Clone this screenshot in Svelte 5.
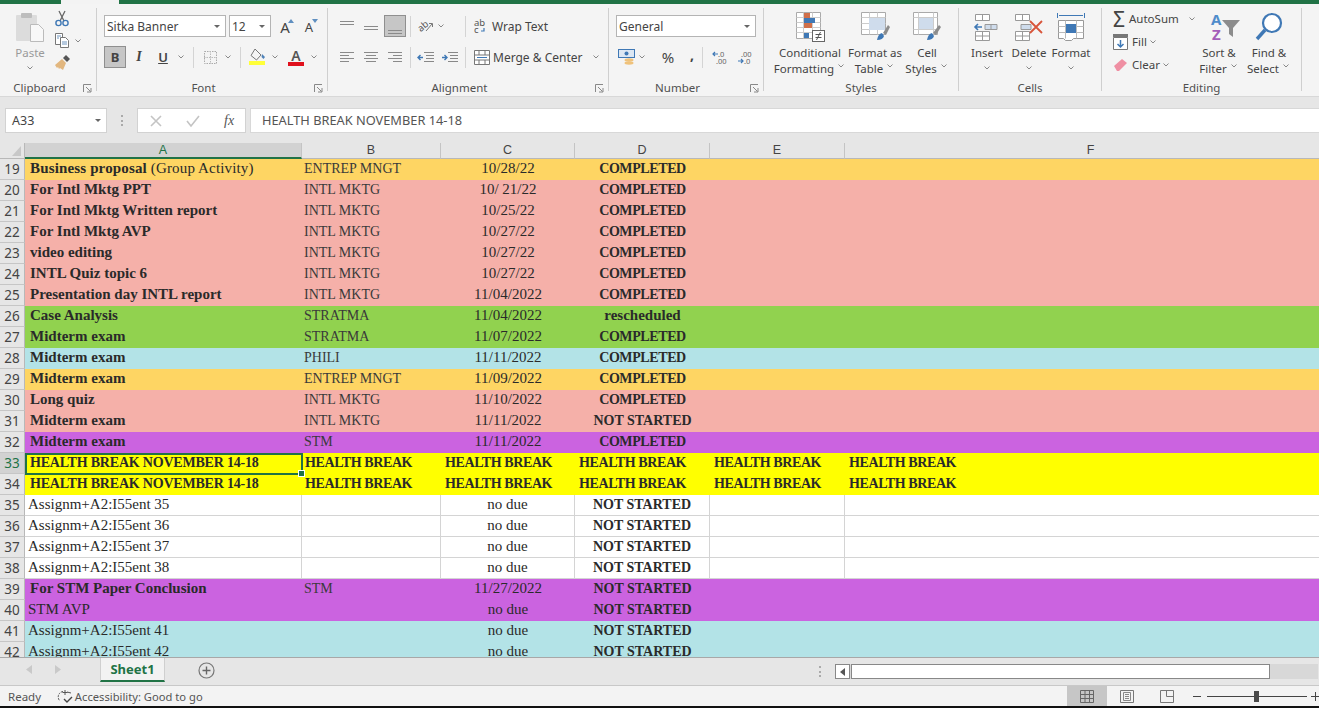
<script>
  const tints = { o: 'orange', p: 'pink', g: 'lime', b: 'blue', v: 'violet', y: 'yellow', w: 'white' };
  const HB = 'HEALTH BREAK';

  // n, tint, task, task bold, subject, due, status
  const rows = [
    [19, 'o', 'Business proposal', true, 'ENTREP MNGT', '10/28/22', 'COMPLETED', ' (Group Activity)'],
    [20, 'p', 'For Intl Mktg PPT', true, 'INTL MKTG', '10/ 21/22', 'COMPLETED'],
    [21, 'p', 'For Intl Mktg Written report', true, 'INTL MKTG', '10/25/22', 'COMPLETED'],
    [22, 'p', 'For Intl Mktg AVP', true, 'INTL MKTG', '10/27/22', 'COMPLETED'],
    [23, 'p', 'video editing', true, 'INTL MKTG', '10/27/22', 'COMPLETED'],
    [24, 'p', 'INTL Quiz topic 6', true, 'INTL MKTG', '10/27/22', 'COMPLETED'],
    [25, 'p', 'Presentation day INTL report', true, 'INTL MKTG', '11/04/2022', 'COMPLETED'],
    [26, 'g', 'Case Analysis', true, 'STRATMA', '11/04/2022', 'rescheduled'],
    [27, 'g', 'Midterm exam', true, 'STRATMA', '11/07/2022', 'COMPLETED'],
    [28, 'b', 'Midterm exam', true, 'PHILI', '11/11/2022', 'COMPLETED'],
    [29, 'o', 'Midterm exam', true, 'ENTREP MNGT', '11/09/2022', 'COMPLETED'],
    [30, 'p', 'Long quiz', true, 'INTL MKTG', '11/10/2022', 'COMPLETED'],
    [31, 'p', 'Midterm exam', true, 'INTL MKTG', '11/11/2022', 'NOT STARTED'],
    [32, 'v', 'Midterm exam', true, 'STM', '11/11/2022', 'COMPLETED'],
    [33, 'y', 'HEALTH BREAK NOVEMBER 14-18', true],
    [34, 'y', 'HEALTH BREAK NOVEMBER 14-18', true],
    [35, 'w', 'Assignm+A2:I55ent 35', false, '', 'no due', 'NOT STARTED'],
    [36, 'w', 'Assignm+A2:I55ent 36', false, '', 'no due', 'NOT STARTED'],
    [37, 'w', 'Assignm+A2:I55ent 37', false, '', 'no due', 'NOT STARTED'],
    [38, 'w', 'Assignm+A2:I55ent 38', false, '', 'no due', 'NOT STARTED'],
    [39, 'v', 'For STM Paper Conclusion', true, 'STM', '11/27/2022', 'NOT STARTED'],
    [40, 'v', 'STM AVP', false, '', 'no due', 'NOT STARTED'],
    [41, 'b', 'Assignm+A2:I55ent 41', false, '', 'no due', 'NOT STARTED'],
    [42, 'b', 'Assignm+A2:I55ent 42', false, '', 'no due', 'NOT STARTED']
  ];

  const topLines = [[1, 15, 3], [1, 15, 6]];
  const midLines = [[1, 15, 8], [1, 15, 11]];
  const botLines = [[1, 15, 12], [1, 15, 15]];
  const leftLines = [[1, 15, 3], [1, 10, 6], [1, 15, 9], [1, 10, 12]];
  const centerLines = [[1, 15, 3], [3, 13, 6], [1, 15, 9], [3, 13, 12]];
  const rightLines = [[1, 15, 3], [6, 15, 6], [1, 15, 9], [6, 15, 12]];
</script>

{#snippet chev()}
  <svg class="chev" width="10" height="6" viewBox="0 0 10 6"><path d="M2.500 1.500 5 4 7.500 1.500" fill="none" stroke="#888" stroke-width="1"/></svg>
{/snippet}

{#snippet lines(list)}
  <svg width="16" height="16" viewBox="0 0 16 16">
    {#each list as l}<path d="M{l[0]} {l[2]}.5H{l[1]}" stroke="#8a8a8a" stroke-width="1"/>{/each}
  </svg>
{/snippet}

{#snippet launcher()}
  <svg class="launch" width="9" height="9" viewBox="0 0 9 9"><path d="M.5 8V.5H8M3 3l4.500 4.500M4 8h4V4" fill="none" stroke="#888" stroke-width="1"/></svg>
{/snippet}

<div class="page">
  <div class="titlebar"><span class="brand first"></span><span class="tab-gap"></span><span class="brand rest"></span></div>

  <div class="ribbon">
    <section class="group clipboard">
      <div class="body">
        <div class="big paste">
          <svg width="30" height="30" viewBox="0 0 30 30">
            <rect x="1" y="3" width="21" height="26" rx="1" fill="#dcdcdc"/>
            <rect x="6" y="1" width="11" height="5" rx="1" fill="#bdbdbd"/>
            <path d="M15.500 12.500h8l5 5v12h-13z" fill="#f8f8f8" stroke="#bbb"/>
          </svg>
          <span class="muted">Paste</span>
          {@render chev()}
        </div>
        <div class="small-col">
          <svg width="16" height="17" viewBox="0 0 16 17">
            <path d="M5 1l5 10M11 1 6 11" stroke="#666" stroke-width="1.300"/>
            <circle cx="4.500" cy="13" r="2.600" fill="none" stroke="#3f78b5" stroke-width="1.400"/>
            <circle cx="11.500" cy="13" r="2.600" fill="none" stroke="#3f78b5" stroke-width="1.400"/>
          </svg>
          <div class="copy">
            <svg width="16" height="15" viewBox="0 0 16 15">
              <path d="M1.500.5h7v11h-7z" fill="#fff" stroke="#777"/>
              <path d="M6.500 4.500h5l3 3v7h-8z" fill="#fff" stroke="#777"/>
              <path d="M3 3h4M3 5h2M8 9h5M8 11h5" stroke="#6d93bd"/>
            </svg>
            {@render chev()}
          </div>
          <svg width="17" height="17" viewBox="0 0 17 17">
            <path d="M1 11 8 5l4 4-3 7-3-2-1 1-1-2-1 1z" fill="#e2b77f"/>
            <path d="M9 4l3-3 4 4-3 3z" fill="#555"/>
          </svg>
        </div>
      </div>
      <div class="label off">Clipboard{@render launcher()}</div>
    </section>
    <i class="vsep"></i>

    <section class="group font">
      <div class="stack">
        <div class="line">
          <div class="combo font-name"><span>Sitka Banner</span><b class="caret"></b></div>
          <div class="combo font-size"><span>12</span><b class="caret"></b></div>
          <span class="btn grow-a">A<svg width="6" height="4" viewBox="0 0 6 4"><path d="M0 4 3 0l3 4z" fill="#5f8fc0"/></svg></span>
          <span class="btn shrink-a">A<svg width="6" height="4" viewBox="0 0 6 4"><path d="M0 0l3 4 3-4z" fill="#5f8fc0"/></svg></span>
        </div>
        <div class="line">
          <span class="btn on strong">B</span>
          <span class="btn ital">I</span>
          <span class="btn under">U</span>
          {@render chev()}
          <i class="hsep"></i>
          <span class="btn">
            <svg width="15" height="15" viewBox="0 0 15 15"><path d="M1.500 1.500h12v12h-12z" fill="none" stroke="#aaa" stroke-dasharray="1.500 1"/><path d="M7.500 1v13M1 7.500h13" stroke="#bbb" stroke-dasharray="1.500 1"/></svg>
          </span>
          {@render chev()}
          <i class="hsep"></i>
          <span class="btn">
            <svg width="17" height="18" viewBox="0 0 17 18">
              <path d="M6 1l6 6-4.500 5L2 7.500z" fill="#f4f4f4" stroke="#777"/>
              <path d="M13 6l3 3-1.500 2-2-2z" fill="#4e82b8"/>
              <rect x="0" y="13" width="16" height="4" fill="#ffff38"/>
            </svg>
          </span>
          {@render chev()}
          <span class="btn color-a">
            <em>A</em><i class="red"></i>
          </span>
          {@render chev()}
        </div>
      </div>
      <div class="label off">Font{@render launcher()}</div>
    </section>
    <i class="vsep"></i>

    <section class="group alignment">
      <div class="stack">
        <div class="line">
          <span class="btn">{@render lines(topLines)}</span>
          <span class="btn">{@render lines(midLines)}</span>
          <span class="btn on">{@render lines(botLines)}</span>
          <i class="hsep tight"></i>
          <span class="btn">
            <svg width="18" height="16" viewBox="0 0 18 16"><text x="1" y="12" transform="rotate(-40 6 8)" class="svg-t">ab</text><path d="M10 13 16 6M13 5.500h3.500V9" fill="none" stroke="#777"/></svg>
          </span>
          <span class="pull">{@render chev()}</span>
          <i class="hsep wide"></i>
          <div class="labelled">
            <svg width="14" height="16" viewBox="0 0 14 16"><text x="0" y="7.500" class="svg-t">ab</text><text x="0" y="15" class="svg-t">c</text><path d="M10 10v3H7" fill="none" stroke="#3f78b5" stroke-width="1.200"/></svg>
            <span>Wrap Text</span>
          </div>
        </div>
        <div class="line">
          <span class="btn">{@render lines(leftLines)}</span>
          <span class="btn">{@render lines(centerLines)}</span>
          <span class="btn">{@render lines(rightLines)}</span>
          <i class="hsep tight"></i>
          <span class="btn">
            <svg width="17" height="13" viewBox="0 0 17 13"><path d="M7 1.500h10M9 4.500h8M9 7.500h8M7 10.500h10" stroke="#888"/><path d="M6 6.500H1M3.500 4 1 6.500 3.500 9" fill="none" stroke="#3f78b5" stroke-width="1.400"/></svg>
          </span>
          <span class="btn">
            <svg width="17" height="13" viewBox="0 0 17 13"><path d="M7 1.500h10M9 4.500h8M9 7.500h8M7 10.500h10" stroke="#888"/><path d="M1 6.500h5M3.500 4 6 6.500 3.500 9" fill="none" stroke="#3f78b5" stroke-width="1.400"/></svg>
          </span>
          <i class="hsep merge-sep"></i>
          <div class="labelled merge">
            <svg width="16" height="15" viewBox="0 0 16 15"><path d="M.5.500h15v14H.5zM.5 5h15M.5 10h15M5 .5V5M11 .5V5M5 10v4.500M11 10v4.500" fill="#fff" stroke="#777"/><path d="M3 7.500h10" stroke="#3f78b5"/></svg>
            <span>Merge &amp; Center</span>
            {@render chev()}
          </div>
        </div>
      </div>
      <div class="label off">Alignment{@render launcher()}</div>
    </section>
    <i class="vsep"></i>

    <section class="group number">
      <div class="stack">
        <div class="line">
          <div class="combo general"><span>General</span><b class="caret"></b></div>
        </div>
        <div class="line numline">
          <svg width="19" height="18" viewBox="0 0 19 18"><rect x=".5" y="1.500" width="16" height="8" fill="#dce7f3" stroke="#3f78b5"/><circle cx="8.500" cy="5.500" r="2" fill="#3f78b5"/><ellipse cx="11" cy="12" rx="4.500" ry="1.700" fill="#efc27b"/><ellipse cx="11" cy="15" rx="4.500" ry="1.700" fill="#efc27b"/></svg>
          {@render chev()}
          <span class="pct">%</span>
          <span class="comma">,</span>
          <i class="hsep"></i>
          <svg width="16" height="15" viewBox="0 0 16 15"><text x="6" y="7" class="svg-n">.0</text><text x="4" y="14" class="svg-n">.00</text><path d="M6 4H1M3 2 1 4l2 2" fill="none" stroke="#3f78b5" stroke-width="1.200"/></svg>
          <svg class="dec-r" width="16" height="15" viewBox="0 0 16 15"><text x="4" y="7" class="svg-n">.00</text><text x="7" y="14" class="svg-n">.0</text><path d="M1 11h5M4 9l2 2-2 2" fill="none" stroke="#3f78b5" stroke-width="1.200"/></svg>
        </div>
      </div>
      <div class="label off">Number{@render launcher()}</div>
    </section>
    <i class="vsep"></i>

    <section class="group styles">
      <div class="body">
        <div class="big cond">
          <svg width="30" height="30" viewBox="0 0 30 30">
            <path d="M1.500 .5h24v26h-24z" fill="#fff" stroke="#aaa"/>
            <path d="M1.500 5.500h24M1.500 10.500h24M1.500 15.500h24M1.500 20.500h24M8.500 .5v26M17.500 .5v26" stroke="#ccc"/>
            <rect x="9" y="1" width="6" height="5" fill="#d0704a"/>
            <rect x="9" y="6" width="11" height="5" fill="#3f78b5"/>
            <rect x="9" y="11" width="8" height="5" fill="#d0704a"/>
            <rect x="9" y="21" width="5" height="5" fill="#3f78b5"/>
            <rect x="17.500" y="18.500" width="12" height="11" fill="#fff" stroke="#666"/>
            <path d="M20.500 22.500h6M20.500 25.500h6M25.500 20l-4 8" stroke="#555" fill="none"/>
          </svg>
          <span>Conditional</span>
          <span>Formatting{@render chev()}</span>
        </div>
        <div class="big fmt-table">
          <svg width="30" height="30" viewBox="0 0 30 30">
            <path d="M1.500 .5h24v22h-24z" fill="#fff" stroke="#aaa"/>
            <path d="M1.500 5.500h24M1.500 11.500h24M1.500 17.500h24M9.500 .5v22M17.500 .5v22" stroke="#ccc"/>
            <rect x="9" y="6" width="16" height="12" fill="#cfdcec"/>
            <path d="M17 28q1-6 5-7l2 3q-1 4-7 4z" fill="#3f78b5"/>
            <path d="M23 21l5-8 2 2-4 8z" fill="#8c8c8c"/>
          </svg>
          <span>Format as</span>
          <span>Table{@render chev()}</span>
        </div>
        <div class="big cell-styles">
          <svg width="30" height="30" viewBox="0 0 30 30">
            <path d="M1.500 .5h24v22h-24z" fill="#fff" stroke="#aaa"/>
            <path d="M1.500 5.500h24M1.500 17.500h24M6.500 .5v22M21.500 .5v22" stroke="#ccc"/>
            <rect x="7" y="6" width="14" height="11" fill="#cfdcec"/>
            <path d="M15 28q1-6 5-7l2 3q-1 4-7 4z" fill="#3f78b5"/>
            <path d="M21 21l6-8 2 2-5 8z" fill="#8c8c8c"/>
          </svg>
          <span>Cell</span>
          <span>Styles{@render chev()}</span>
        </div>
      </div>
      <div class="label">Styles</div>
    </section>
    <i class="vsep"></i>

    <section class="group cells">
      <div class="body">
        <div class="big cell-btn">
          <svg width="30" height="30" viewBox="0 0 30 30">
            <path d="M3.500 2.500h14v6h-14zM10.500 2.500v6M3.500 19.500h14v9h-14zM3.500 24h14M10.500 19.500v9" fill="#fff" stroke="#999"/>
            <path d="M13 12.500h12v5H13zM19 12.500v5" fill="#cfdcec" stroke="#999"/>
            <path d="M10 15H3M6 12l-3 3 3 3" fill="none" stroke="#3f78b5" stroke-width="1.600"/>
          </svg>
          <span>Insert</span>{@render chev()}
        </div>
        <div class="big cell-btn">
          <svg width="30" height="30" viewBox="0 0 30 30">
            <path d="M1.500 2.500h14v6h-14zM8.500 2.500v6M1.500 19.500h14v9h-14zM1.500 24h14M8.500 19.500v9" fill="#fff" stroke="#999"/>
            <path d="M7 12.500h10v5H7z" fill="#cfdcec" stroke="#999"/>
            <path d="M16 9 28 21M28 9 16 21" stroke="#d8553a" stroke-width="1.800"/>
          </svg>
          <span>Delete</span>{@render chev()}
        </div>
        <div class="big cell-btn">
          <svg width="30" height="30" viewBox="0 0 30 30">
            <path d="M1.500 1v5M28.500 1v5M3 3.500h24" stroke="#3f78b5" fill="none"/>
            <path d="M2.500 8.500h25v18h-10l-2 2h-6l-2-2h-5z" fill="#fff" stroke="#999"/>
            <path d="M9.500 8.500v18M20.500 8.500v18M2.500 14.500h25M2.500 20.500h25" stroke="#bbb"/>
            <rect x="10" y="12" width="10" height="9" fill="#3f78b5"/>
          </svg>
          <span>Format</span>{@render chev()}
        </div>
      </div>
      <div class="label">Cells</div>
    </section>
    <i class="vsep"></i>

    <section class="group editing">
      <div class="body">
        <div class="small-col edit-col">
          <div class="edit-item">
            <span class="sigma">Σ</span><span>AutoSum</span>{@render chev()}
          </div>
          <div class="edit-item">
            <svg width="15" height="16" viewBox="0 0 15 16"><path d="M.5 3.500h14v12H.5z" fill="#fff" stroke="#777"/><rect x="0" y="0" width="15" height="3" fill="#777"/><path d="M7.500 6v7M4.500 10l3 3 3-3" fill="none" stroke="#3f78b5" stroke-width="1.500"/></svg>
            <span>Fill</span>{@render chev()}
          </div>
          <div class="edit-item">
            <svg width="15" height="14" viewBox="0 0 15 14"><path d="M1 8 9 1l5 4-8 8H4z" fill="#ef8fa3"/></svg>
            <span>Clear</span>{@render chev()}
          </div>
        </div>
        <div class="big sort">
          <svg class="az" width="30" height="30" viewBox="0 0 30 30">
            <text x="1" y="13" class="svg-az blue-t">A</text>
            <text x="2" y="28" class="svg-az purple-t">Z</text>
            <path d="M12 8h18l-7 8v9l-4-3v-6z" fill="#8c8c8c"/>
          </svg>
          <span>Sort &amp;</span>
          <span>Filter{@render chev()}</span>
        </div>
        <div class="big find">
          <svg width="30" height="30" viewBox="0 0 30 30">
            <circle cx="18" cy="11" r="9" fill="#fff" stroke="#3f78b5" stroke-width="2.200"/>
            <path d="M11 18 3 27" stroke="#3f78b5" stroke-width="3.400"/>
          </svg>
          <span>Find &amp;</span>
          <span>Select{@render chev()}</span>
        </div>
      </div>
      <div class="label">Editing</div>
    </section>
    <i class="vsep"></i>
  </div>

  <div class="fbar">
    <div class="namebox"><span>A33</span><b class="caret"></b></div>
    <div class="grip"></div>
    <div class="fx-box">
      <svg width="12" height="12" viewBox="0 0 12 12"><path d="M1 1l10 10M11 1 1 11" stroke="#c4c4c4" stroke-width="1.600"/></svg>
      <svg width="14" height="12" viewBox="0 0 14 12"><path d="M1 6l4 5 8-10" fill="none" stroke="#c4c4c4" stroke-width="1.600"/></svg>
      <span class="fx">fx</span>
    </div>
    <div class="formula">HEALTH BREAK NOVEMBER 14-18</div>
  </div>

  <div class="sheet">
    <div class="grid-row heads">
      <div class="corner"><svg width="9" height="10" viewBox="0 0 9 10"><path d="M9 0v10H0z" fill="#c8c8c8"/></svg></div>
      <div class="ch sel">A</div>
      <div class="ch">B</div>
      <div class="ch">C</div>
      <div class="ch">D</div>
      <div class="ch">E</div>
      <div class="ch">F</div>
    </div>
    {#each rows as r}
      <div class="grid-row {tints[r[1]]}">
        <div class="rh" class:sel={r[0] === 33}>{r[0]}</div>
        {#if r[1] === 'y'}
          <div class="c a b headline">{r[2]}{#if r[0] === 33}<i class="cursor"><i class="handle"></i></i>{/if}</div>
          <div class="c hb">{HB}</div>
          <div class="c hb">{HB}</div>
          <div class="c hb">{HB}</div>
          <div class="c hb">{HB}</div>
          <div class="c hb">{HB}</div>
        {:else}
          <div class="c a" class:b={r[3]}>{r[2]}{#if r[7]}<span class="reg">{r[7]}</span>{/if}</div>
          <div class="c sub">{r[4]}</div>
          <div class="c mid">{r[5]}</div>
          <div class="c mid b" class:done={r[6] === 'COMPLETED'} class:todo={r[6] === 'NOT STARTED'}>{r[6]}</div>
          <div class="c"></div>
          <div class="c"></div>
        {/if}
      </div>
    {/each}
  </div>

  <div class="tabs">
    <div class="nav">
      <svg width="6" height="9" viewBox="0 0 6 9"><path d="M6 0v9L0 4.500z" fill="#c9c9c9"/></svg>
      <svg width="6" height="9" viewBox="0 0 6 9"><path d="M0 0v9l6-4.500z" fill="#c9c9c9"/></svg>
    </div>
    <div class="tab">Sheet1</div>
    <svg class="add" width="17" height="17" viewBox="0 0 17 17"><circle cx="8.500" cy="8.500" r="7.500" fill="none" stroke="#777" stroke-width="1.200"/><path d="M8.500 4.500v8M4.500 8.500h8" stroke="#666" stroke-width="1.400"/></svg>
    <div class="grip tab-grip"></div>
    <div class="scroll">
      <span class="arrow"><svg width="6" height="8" viewBox="0 0 6 8"><path d="M5 0v8L0 4z" fill="#555"/></svg></span>
      <span class="thumb"></span>
    </div>
  </div>

  <div class="status">
    <span class="ready">Ready</span>
    <svg class="acc" width="17" height="15" viewBox="0 0 17 15"><path d="M6 2.500A5.500 5.500 0 0 0 3 12" fill="none" stroke="#555" stroke-dasharray="2 1"/><path d="M8 1v5M5.500 3.500h5M10 3l4 1" fill="none" stroke="#555"/><path d="M7 10l3 3 5-5" fill="none" stroke="#444" stroke-width="1.400"/></svg>
    <span class="acc-t">Accessibility: Good to go</span>
    <div class="views">
      <span class="view on"><svg width="14" height="13" viewBox="0 0 14 13"><path d="M.5.500h13v12H.5zM.5 4.500h13M.5 8.500h13M5 .5v12M9.500.5v12" fill="none" stroke="#666"/></svg></span>
      <span class="view"><svg width="14" height="13" viewBox="0 0 14 13"><path d="M.5.500h13v12H.5z" fill="none" stroke="#777"/><path d="M3.500 2.500h7v8h-7zM5 4.500h4M5 6.500h4M5 8.500h4" fill="none" stroke="#888"/></svg></span>
      <span class="view"><svg width="14" height="13" viewBox="0 0 14 13"><path d="M.5.500h13v12H.5zM6.500.5v6h7" fill="none" stroke="#777"/></svg></span>
    </div>
    <div class="zoom">
      <i class="minus"></i>
      <div class="track"><i class="knob"></i></div>
      <i class="plus"></i>
    </div>
  </div>
  <div class="black"></div>
</div>

<style>
  :global(body) { margin: 0; background: #f3f3f3; }
  .page { width: 1319px; height: 708px; overflow: hidden; display: flex; flex-direction: column; font-family: "Noto Sans", sans-serif; color: #444; }
  svg { overflow: visible; }

  .titlebar { height: 4px; display: flex; flex: none; }
  .brand { background: #217346; }
  .first { width: 61px; }
  .tab-gap { width: 58px; background: #f3f3f3; }
  .rest { flex: 1; }

  .ribbon { height: 92px; flex: none; display: flex; background: #f4f4f4; font-size: 11.500px; }
  .vsep { width: 1px; margin: 4px 0 5px; background: #cfcfcf; flex: none; }
  .group { position: relative; display: flex; flex-direction: column; flex: none; }
  .clipboard { width: 96px; }
  .font { width: 230px; }
  .alignment { width: 280px; }
  .number { width: 154px; }
  .styles { width: 194px; }
  .cells { width: 142px; }
  .editing { width: 199px; }
  .body, .stack { flex: 1; display: flex; min-height: 0; }
  .stack { flex-direction: column; padding-top: 11px; gap: 9px; }
  .label { height: 15px; margin-bottom: 1px; line-height: 15px; text-align: center; color: #505050; }
  .label.off { padding-right: 17px; }
  .launch { position: absolute; right: 4px; bottom: 3px; }

  .line { height: 22px; display: flex; align-items: center; gap: 2px; }
  .font .stack { padding-left: 7px; }
  .alignment .stack { padding-left: 8px; }
  .number .stack { padding-left: 7px; }

  .btn { width: 22px; height: 22px; box-sizing: border-box; display: flex; align-items: center; justify-content: center; flex: none; position: relative; }
  .btn.on { background: #c6c6c6; border: 1px solid #8f8f8f; }
  .strong { font-weight: 700; font-size: 13px; }
  .ital { font: italic 700 14px "Liberation Serif", serif; }
  .under { text-decoration: underline; font-weight: 600; font-size: 13px; }
  .grow-a, .shrink-a { align-items: flex-end; font-size: 15px; line-height: 20px; }
  .grow-a { margin-left: 1px; }
  .shrink-a { font-size: 13px; }
  .grow-a svg, .shrink-a svg { position: absolute; top: 4px; right: 2px; }
  .color-a { flex-direction: column; margin-left: 3px; }
  .color-a em { font-style: normal; font-weight: 600; font-size: 14px; line-height: 13px; color: #555; }
  .red { width: 16px; height: 4px; background: #e0101c; }
  .chev { flex: none; }
  .pull { display: flex; margin-left: -2px; }
  .hsep { width: 1px; height: 21px; background: #d4d4d4; flex: none; margin: 0 3px 0 5px; }
  .hsep.tight { margin: 0 1px 0 2px; }
  .hsep.wide { margin: 0 6px 0 17px; }
  .hsep.merge-sep { margin: 0 6px 0 3px; }

  .combo { height: 22px; box-sizing: border-box; border: 1px solid #b4b4b4; background: #fff; display: flex; align-items: center; justify-content: space-between; padding: 0 5px 0 2px; font-size: 12px; flex: none; }
  .font-name { width: 122px; margin-right: 1px; }
  .font-size { width: 42px; }
  .general { width: 140px; }
  .caret { width: 0; height: 0; border: 3px solid transparent; border-top: 3.500px solid #666; border-bottom: 0; }

  .labelled { display: flex; align-items: center; gap: 4px; font-size: 12px; white-space: nowrap; }
  .merge { gap: 3px; }
  .merge .chev { margin-left: 5px; }

  .numline { gap: 0; padding-left: 2px; }
  .pct { width: 18px; text-align: center; font-size: 15px; margin-left: 12px; }
  .comma { width: 10px; text-align: center; font-weight: 700; font-size: 14px; margin: -6px 0 0 10px; }
  .numline .hsep { margin: 0 9px 0 5px; }
  .dec-r { margin-left: 9px; }
  .svg-t { font: 9.500px "Noto Sans", sans-serif; fill: #555; }
  .svg-n { font: 7.500px "Noto Sans", sans-serif; fill: #666; }
  .svg-az { font: 700 15px "Noto Sans", sans-serif; }
  .blue-t { fill: #4f8ccb; }
  .purple-t { fill: #a45cb8; }

  .big { display: flex; flex-direction: column; align-items: center; flex: none; padding-top: 8px; line-height: 16px; white-space: nowrap; }
  .big svg:first-child { margin-bottom: 3px; }
  .big .chev { margin-left: 2px; vertical-align: 1px; }
  .paste { width: 40px; margin-left: 10px; }
  .muted { color: #9a9a9a; }
  .paste > .chev, .cell-btn > .chev { margin: 4px 0 0; }
  .small-col { display: flex; flex-direction: column; gap: 6px; padding: 6px 0 0 4px; }
  .copy { display: flex; align-items: center; gap: 3px; }
  .styles .body { padding-left: 13px; }
  .cond { width: 66px; }
  .fmt-table { width: 64px; }
  .cell-styles { width: 40px; }
  .cells .body { padding-left: 7px; }
  .cell-btn { width: 42px; }

  .edit-col { width: 92px; box-sizing: border-box; gap: 0; padding: 3px 0 0 11px; font-size: 11.500px; }
  .edit-item { height: 23px; display: flex; align-items: center; gap: 4px; white-space: nowrap; }
  .edit-item .chev { margin-left: -3px; }
  .edit-item:first-child .chev { margin-left: 4px; }
  .sigma { font-size: 21px; line-height: 20px; color: #444; width: 16px; }
  .sort, .find { width: 50px; }
  .az { margin-left: 12px; }

  .fbar { height: 47px; flex: none; box-sizing: border-box; padding: 11px 0 10px 5px; background: #e6e6e6; border-top: 1px solid #d8d8d8; display: flex; font-size: 12.500px; }
  .namebox { width: 102px; box-sizing: border-box; background: #fff; border: 1px solid #d2d2d2; display: flex; align-items: center; justify-content: space-between; padding: 0 5px 0 6px; }
  .grip { width: 2px; height: 11px; margin: 7px 14px 0; border-left: 2px dotted #aaa; box-sizing: border-box; }
  .fx-box { width: 109px; box-sizing: border-box; background: #fff; border: 1px solid #d2d2d2; display: flex; align-items: center; gap: 24px; padding-left: 12px; margin-right: 4px; }
  .fx { font: italic 14px "Liberation Serif", serif; color: #555; }
  .formula { flex: 1; background: #fff; border: 1px solid #d8d8d8; border-right: 0; padding-left: 11px; line-height: 23px; color: #555; font-size: 12.800px; }

  .sheet { height: 514px; flex: none; overflow: hidden; background: #fff; font: 15px "Liberation Serif", serif; color: #2a2a2a; }
  .grid-row { display: grid; grid-template-columns: 25px 277px 139px 134px 135px 135px 492px; height: 21px; width: 1337px; }
  .heads { height: 16px; background: #e6e6e6; font: 12.500px/14px "Liberation Sans", sans-serif; color: #444; }
  .corner { display: flex; justify-content: flex-end; align-items: center; padding-right: 3px; border-right: 1px solid #b8b8b8; box-sizing: border-box; border-bottom: 1px solid #b8b8b8; }
  .ch { text-align: center; border-right: 1px solid #c4c4c4; border-bottom: 1px solid #b8b8b8; box-sizing: border-box; }
  .ch.sel { background: #d2d2d2; color: #217346; border-bottom: 2px solid #217346; }
  .rh { background: #e6e6e6; border-right: 1px solid #b8b8b8; border-bottom: 1px solid #c6c6c6; box-sizing: border-box; font: 13.500px/20px "Noto Sans", sans-serif; color: #444; text-align: center; }
  .rh.sel { background: #d2d2d2; color: #217346; }

  .c { box-sizing: border-box; line-height: 18px; white-space: nowrap; position: relative; min-width: 0; }
  .a { padding-left: 5px; }
  .a:not(.b) { padding-left: 3px; }
  .a:has(.reg) { letter-spacing: .15px; }
  .b { font-weight: 700; }
  .reg { font-weight: 400; }
  .sub { padding-left: 2px; color: #3a3a3a; font-size: 14px; line-height: 19px; }
  .mid { text-align: center; }
  .done { font-size: 14px; letter-spacing: -.4px; line-height: 19px; }
  .todo { font-size: 14px; line-height: 19px; }
  .headline { font-size: 14px; letter-spacing: -.2px; line-height: 19px; }
  .hb { font-weight: 700; padding-left: 3px; font-size: 14px; letter-spacing: -.4px; line-height: 19px; }
  .hb + .hb { padding-left: 4px; }

  .orange { background: #fed563; }
  .pink { background: #f5b0a9; }
  .lime { background: #91d24f; }
  .blue { background: #b3e3e7; }
  .violet { background: #cb63e0; }
  .yellow { background: #ffff00; }
  .white { background: #fff; }
  .white .c { border-right: 1px solid #d4d4d4; border-bottom: 1px solid #d4d4d4; }

  .cursor { position: absolute; left: 0; top: 0; right: -1px; bottom: -1px; border: 2px solid #217346; }
  .handle { position: absolute; right: -4px; bottom: -4px; width: 5px; height: 5px; background: #217346; border: 1px solid #fff; }

  .tabs { height: 28px; flex: none; box-sizing: border-box; background: #e6e6e6; border-top: 1px solid #a8a8a8; display: flex; font-size: 13px; position: relative; }
  .nav { width: 100px; box-sizing: border-box; display: flex; align-items: center; gap: 23px; padding: 0 0 4px 26px; }
  .tab { width: 65px; height: 24px; box-sizing: border-box; background: #f2f2f2; border: 1px solid #cfcfcf; border-width: 0 1px; border-bottom: 2px solid #217346; text-align: center; line-height: 22px; font-weight: 700; color: #217346; }
  .add { margin: 4px 0 0 33px; }
  .tab-grip { margin: 8px 0 0 604px; }
  .scroll { margin: 6px 0 0 14px; width: 483px; height: 15px; display: flex; background: #d8d8d8; }
  .arrow { width: 15px; box-sizing: border-box; background: #fff; border: 1px solid #888; display: flex; align-items: center; justify-content: center; }
  .thumb { width: 419px; box-sizing: border-box; background: #fff; border: 1px solid #888; margin-left: 1px; }

  .status { height: 21px; flex: none; box-sizing: border-box; background: #f3f3f3; border-top: 1px solid #c8c8c8; display: flex; align-items: center; font-size: 11.500px; color: #555; }
  .ready { margin-left: 8px; width: 49px; }
  .acc { flex: none; }
  .acc-t { margin-left: 1px; width: 995px; white-space: nowrap; font-size: 11.200px; }
  .views { display: flex; align-self: stretch; }
  .view { width: 40px; display: flex; align-items: center; justify-content: center; }
  .view.on { background: #c6c6c6; }
  .zoom { display: flex; align-items: center; margin-left: 6px; }
  .minus { width: 8px; height: 1px; background: #444; }
  .track { width: 100px; height: 1px; background: #444; position: relative; margin: 0 4px 0 6px; }
  .knob { position: absolute; left: 47px; top: -5px; width: 5px; height: 11px; background: #4a4a4a; }
  .plus { width: 8px; height: 9px; background: linear-gradient(#444, #444) center / 8px 1px no-repeat, linear-gradient(#444, #444) center / 1px 9px no-repeat; }
  .black { height: 2px; background: #111; flex: none; }
</style>
